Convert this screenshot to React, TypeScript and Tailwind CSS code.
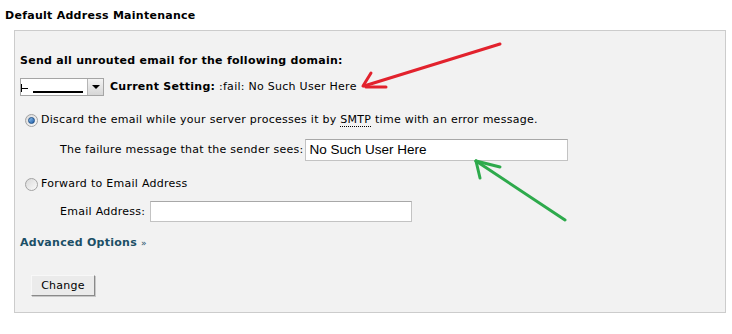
import React from 'react';

const Radio = ({ checked }: { checked?: boolean }) => (
  <span className="relative inline-flex h-[13px] w-[13px] shrink-0 items-center justify-center rounded-full border border-[#a3a3a3] bg-gradient-to-br from-[#d9d9d9] to-[#fafafa]">
    {checked && (
      <span className="h-[7px] w-[7px] rounded-full border border-[#1e4f87] bg-gradient-to-br from-[#8fc3f0] to-[#1f5ea8]" />
    )}
  </span>
);

export default function App() {
  return (
    <div className="relative h-[334px] w-[732px] overflow-hidden bg-white font-['DejaVu_Sans',Verdana,sans-serif] text-[11px] leading-[14px] tracking-[0.27px] text-black">
      <h2 className="pl-[5px] pt-[9px] font-bold">Default Address Maintenance</h2>

      <div className="ml-[14px] mt-[7px] h-[283px] w-[712px] border border-[#cccccc] bg-[#f2f2f2] pl-[5px]">
        <p className="mt-[23px] font-bold">Send all unrouted email for the following domain:</p>

        <div className="mt-[10px] flex items-center gap-[6px]">
          <div className="flex h-[18px] w-[84px] items-center border border-[#a5a5a5] bg-white">
            <div className="relative flex-1 self-stretch">
              <span className="absolute left-0 top-[5px] h-[8px] w-px bg-black" />
              <span className="absolute left-0 top-[9px] h-px w-[7px] bg-black" />
              <span className="absolute left-[12px] top-[12px] h-[2px] w-[50px] bg-black" />
            </div>
            <div className="flex h-[16px] w-[16px] items-center justify-center border-l border-[#b5b5b5] bg-gradient-to-b from-[#f4f4f4] to-[#d6d6d6]">
              <span className="h-0 w-0 border-x-[4px] border-t-[4px] border-x-transparent border-t-black" />
            </div>
          </div>
          <span>
            <b>Current Setting:</b> :fail: No Such User Here
          </span>
        </div>

        <label className="ml-[5px] mt-[17px] flex items-center gap-[3px]">
          <Radio checked />
          <span>
            Discard the email while your server processes it by{' '}
            <span className="border-b border-dotted border-black">SMTP</span> time with an error message.
          </span>
        </label>

        <div className="ml-[40px] mt-[12px] flex items-center gap-[1px]">
          <span>The failure message that the sender sees:</span>
          <div className="flex h-[22px] w-[263px] items-center border border-[#c3c3c3] border-t-[#a8a8a8] bg-white px-[4px] font-['Liberation_Sans',Arial,sans-serif] text-[13.5px] tracking-normal">
            No Such User Here
          </div>
        </div>

        <label className="ml-[5px] mt-[16px] flex items-center gap-[3px]">
          <Radio />
          <span>Forward to Email Address</span>
        </label>

        <div className="ml-[40px] mt-[10px] flex items-center gap-[5px]">
          <span>Email Address:</span>
          <div className="h-[21px] w-[262px] border border-[#c3c3c3] border-t-[#a8a8a8] bg-white" />
        </div>

        <p className="mt-[14px] font-bold text-[#1b4f66]">
          Advanced Options <span className="text-[9px] font-normal">»</span>
        </p>

        <button
          type="button"
          className="ml-[11px] mt-[25px] h-[21px] w-[64px] border border-[#f8f8f8] border-b-[#8a8a8a] border-r-[#8a8a8a] bg-[#ebebeb] text-[11px] shadow-[1px_1px_0_#c8c8c8]"
        >
          Change
        </button>
      </div>

      {/* annotation arrows drawn over the screenshot */}
      <svg className="pointer-events-none absolute left-0 top-0" width="732" height="334" viewBox="0 0 732 334">
        <g stroke="#e2222d" strokeWidth="3" strokeLinecap="round" fill="none">
          <line x1="500" y1="44" x2="364" y2="86" />
          <line x1="371" y1="73" x2="363" y2="86" />
          <line x1="366" y1="87" x2="386" y2="87" />
        </g>
        <g stroke="#2eaa4c" strokeWidth="3" strokeLinecap="round" fill="none">
          <line x1="565" y1="220" x2="476" y2="161" />
          <line x1="476" y1="161" x2="480" y2="178" />
          <line x1="476" y1="161" x2="500" y2="167" />
        </g>
      </svg>
    </div>
  );
}
